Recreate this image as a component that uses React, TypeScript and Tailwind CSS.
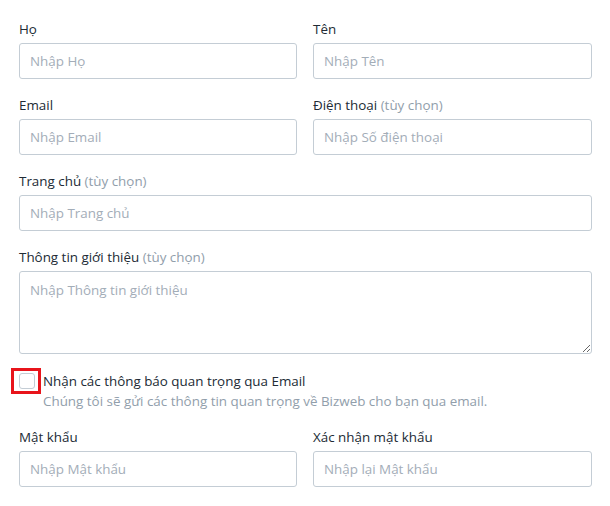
const font = { fontFamily: '"Open Sans", "Noto Sans", sans-serif' };

const Field = ({ label, hint, placeholder }: { label: string; hint?: string; placeholder: string }) => (
	<div className="flex flex-col">
		<label className="mb-1 text-[13.4px] leading-5 text-[#212b35]">
			{label}
			{hint && <span className="text-[#919eab]"> {hint}</span>}
		</label>
		<input
			type="text"
			placeholder={placeholder}
			className="h-[36px] w-full rounded-[3px] border border-[#c4cdd5] bg-white px-[10px] text-[13.4px] text-[#212b35] placeholder:text-[#a3adb8] focus:outline-none"
		/>
	</div>
);

export default function App() {
	return (
		<div className="min-h-[506px] w-[610px] bg-white pl-[19px] pr-[18px] pt-[19px]" style={font}>
			<div className="grid grid-cols-[278px_1fr] gap-x-4 gap-y-4">
				<Field label="Họ" placeholder="Nhập Họ" />
				<Field label="Tên" placeholder="Nhập Tên" />
				<Field label="Email" placeholder="Nhập Email" />
				<Field label="Điện thoại" hint="(tùy chọn)" placeholder="Nhập Số điện thoại" />
			</div>

			<div className="mt-4">
				<Field label="Trang chủ" hint="(tùy chọn)" placeholder="Nhập Trang chủ" />
			</div>

			{/* Intro textarea */}
			<div className="mt-4 flex flex-col">
				<label className="mb-1 text-[13.4px] leading-5 text-[#212b35]">
					Thông tin giới thiệu <span className="text-[#919eab]">(tùy chọn)</span>
				</label>
				<textarea
					placeholder="Nhập Thông tin giới thiệu"
					className="block h-[83px] w-full rounded-[3px] border border-[#c4cdd5] bg-white px-[10px] pt-[8px] text-[13.4px] leading-5 placeholder:text-[#a3adb8] focus:outline-none"
				/>
			</div>

			{/* Newsletter checkbox */}
			<div className="mt-[14px] flex items-start">
				<span className="-ml-[8px] flex h-[26px] w-[30px] border-[3px] border-[#e8141b] pl-[5px] pt-[2px]">
					<span className="block h-4 w-4 rounded-[3px] border border-[#c4cdd5] bg-white" />
				</span>
				<div className="ml-[2px] flex flex-col">
					<span className="pt-[3px] text-[13.4px] leading-5 text-[#212b35]">Nhận các thông báo quan trọng qua Email</span>
					<span className="text-[13.4px] leading-5 text-[#919eab]">
						Chúng tôi sẽ gửi các thông tin quan trọng về Bizweb cho bạn qua email.
					</span>
				</div>
			</div>

			<div className="mt-4 grid grid-cols-[278px_1fr] gap-x-4">
				<Field label="Mật khẩu" placeholder="Nhập Mật khẩu" />
				<Field label="Xác nhận mật khẩu" placeholder="Nhập lại Mật khẩu" />
			</div>
		</div>
	);
}
